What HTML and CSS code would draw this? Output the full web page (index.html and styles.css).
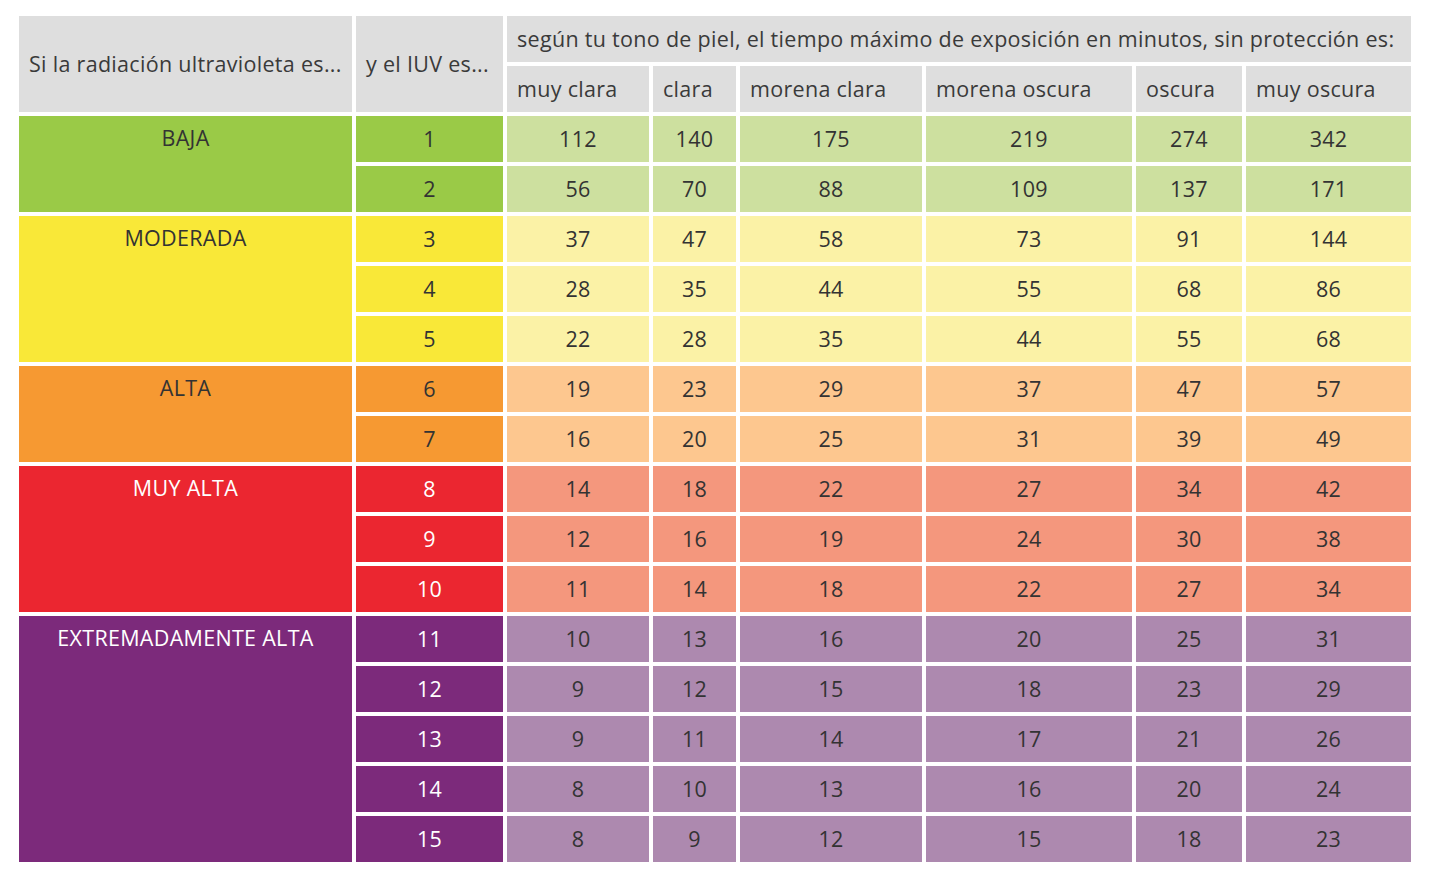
FILE: index.html
```html
<!DOCTYPE html>
<html lang="es">
<head>
<meta charset="utf-8">
<title>Índice UV</title>
<link rel="stylesheet" href="styles.css">
</head>
<body>
<table class="uv">
  <colgroup>
    <col class="c-level"><col class="c-iuv"><col class="c-1"><col class="c-2"><col class="c-3"><col class="c-4"><col class="c-5"><col class="c-6">
  </colgroup>
  <thead>
    <tr>
      <th rowspan="2" class="h">Si la radiación ultravioleta es...</th>
      <th rowspan="2" class="h">y el IUV es...</th>
      <th colspan="6" class="h">según tu tono de piel, el tiempo máximo de exposición en minutos, sin protección es:</th>
    </tr>
    <tr>
      <th class="h">muy clara</th>
      <th class="h">clara</th>
      <th class="h">morena clara</th>
      <th class="h">morena oscura</th>
      <th class="h">oscura</th>
      <th class="h">muy oscura</th>
    </tr>
  </thead>
  <tbody class="low">
    <tr><td rowspan="2" class="lvl">BAJA</td><td class="iuv">1</td><td>112</td><td>140</td><td>175</td><td>219</td><td>274</td><td>342</td></tr>
    <tr><td class="iuv">2</td><td>56</td><td>70</td><td>88</td><td>109</td><td>137</td><td>171</td></tr>
  </tbody>
  <tbody class="mod">
    <tr><td rowspan="3" class="lvl">MODERADA</td><td class="iuv">3</td><td>37</td><td>47</td><td>58</td><td>73</td><td>91</td><td>144</td></tr>
    <tr><td class="iuv">4</td><td>28</td><td>35</td><td>44</td><td>55</td><td>68</td><td>86</td></tr>
    <tr><td class="iuv">5</td><td>22</td><td>28</td><td>35</td><td>44</td><td>55</td><td>68</td></tr>
  </tbody>
  <tbody class="high">
    <tr><td rowspan="2" class="lvl">ALTA</td><td class="iuv">6</td><td>19</td><td>23</td><td>29</td><td>37</td><td>47</td><td>57</td></tr>
    <tr><td class="iuv">7</td><td>16</td><td>20</td><td>25</td><td>31</td><td>39</td><td>49</td></tr>
  </tbody>
  <tbody class="vhigh">
    <tr><td rowspan="3" class="lvl">MUY ALTA</td><td class="iuv">8</td><td>14</td><td>18</td><td>22</td><td>27</td><td>34</td><td>42</td></tr>
    <tr><td class="iuv">9</td><td>12</td><td>16</td><td>19</td><td>24</td><td>30</td><td>38</td></tr>
    <tr><td class="iuv">10</td><td>11</td><td>14</td><td>18</td><td>22</td><td>27</td><td>34</td></tr>
  </tbody>
  <tbody class="ext">
    <tr><td rowspan="5" class="lvl">EXTREMADAMENTE ALTA</td><td class="iuv">11</td><td>10</td><td>13</td><td>16</td><td>20</td><td>25</td><td>31</td></tr>
    <tr><td class="iuv">12</td><td>9</td><td>12</td><td>15</td><td>18</td><td>23</td><td>29</td></tr>
    <tr><td class="iuv">13</td><td>9</td><td>11</td><td>14</td><td>17</td><td>21</td><td>26</td></tr>
    <tr><td class="iuv">14</td><td>8</td><td>10</td><td>13</td><td>16</td><td>20</td><td>24</td></tr>
    <tr><td class="iuv">15</td><td>8</td><td>9</td><td>12</td><td>15</td><td>18</td><td>23</td></tr>
  </tbody>
</table>
</body>
</html>
```

FILE: styles.css
```css
html, body {
  margin: 0;
  padding: 0;
  background: #ffffff;
}

body {
  padding: 12px 0 0 15px;
  font-family: "Open Sans", "Lato", "Liberation Sans", sans-serif;
  color: #333333;
}

.uv {
  border-collapse: separate;
  border-spacing: 4px;
  table-layout: fixed;
  width: 1400px;
  font-size: 21.5px;
  letter-spacing: 0.3px;
}

.c-level { width: 333px; }
.c-iuv { width: 147px; }
.c-1 { width: 142px; }
.c-2 { width: 83px; }
.c-3 { width: 182px; }
.c-4 { width: 206px; }
.c-5 { width: 106px; }
.c-6 { width: 165px; }

.uv th,
.uv td {
  height: 46px;
  padding: 0;
  line-height: 44px;
  text-align: center;
  font-weight: 400;
  white-space: nowrap;
  overflow: hidden;
}

.uv th.h {
  background: #dedede;
  text-align: left;
  padding-left: 10px;
  vertical-align: middle;
  color: #3a3a3a;
}

.uv td.lvl {
  vertical-align: top;
}

/* BAJA */
.low .lvl, .low .iuv { background: #9aca47; }
.low td { background: #cde09f; }

/* MODERADA */
.mod .lvl, .mod .iuv { background: #f9e838; }
.mod td { background: #fbf2a6; }

/* ALTA */
.high .lvl, .high .iuv { background: #f69932; }
.high td { background: #fdc78f; }

/* MUY ALTA */
.vhigh .lvl, .vhigh .iuv { background: #eb2630; color: #ffffff; }
.vhigh td { background: #f4977d; }

/* EXTREMADAMENTE ALTA */
.ext .lvl, .ext .iuv { background: #7c2a7b; color: #ffffff; }
.ext td { background: #ad89af; }
```
